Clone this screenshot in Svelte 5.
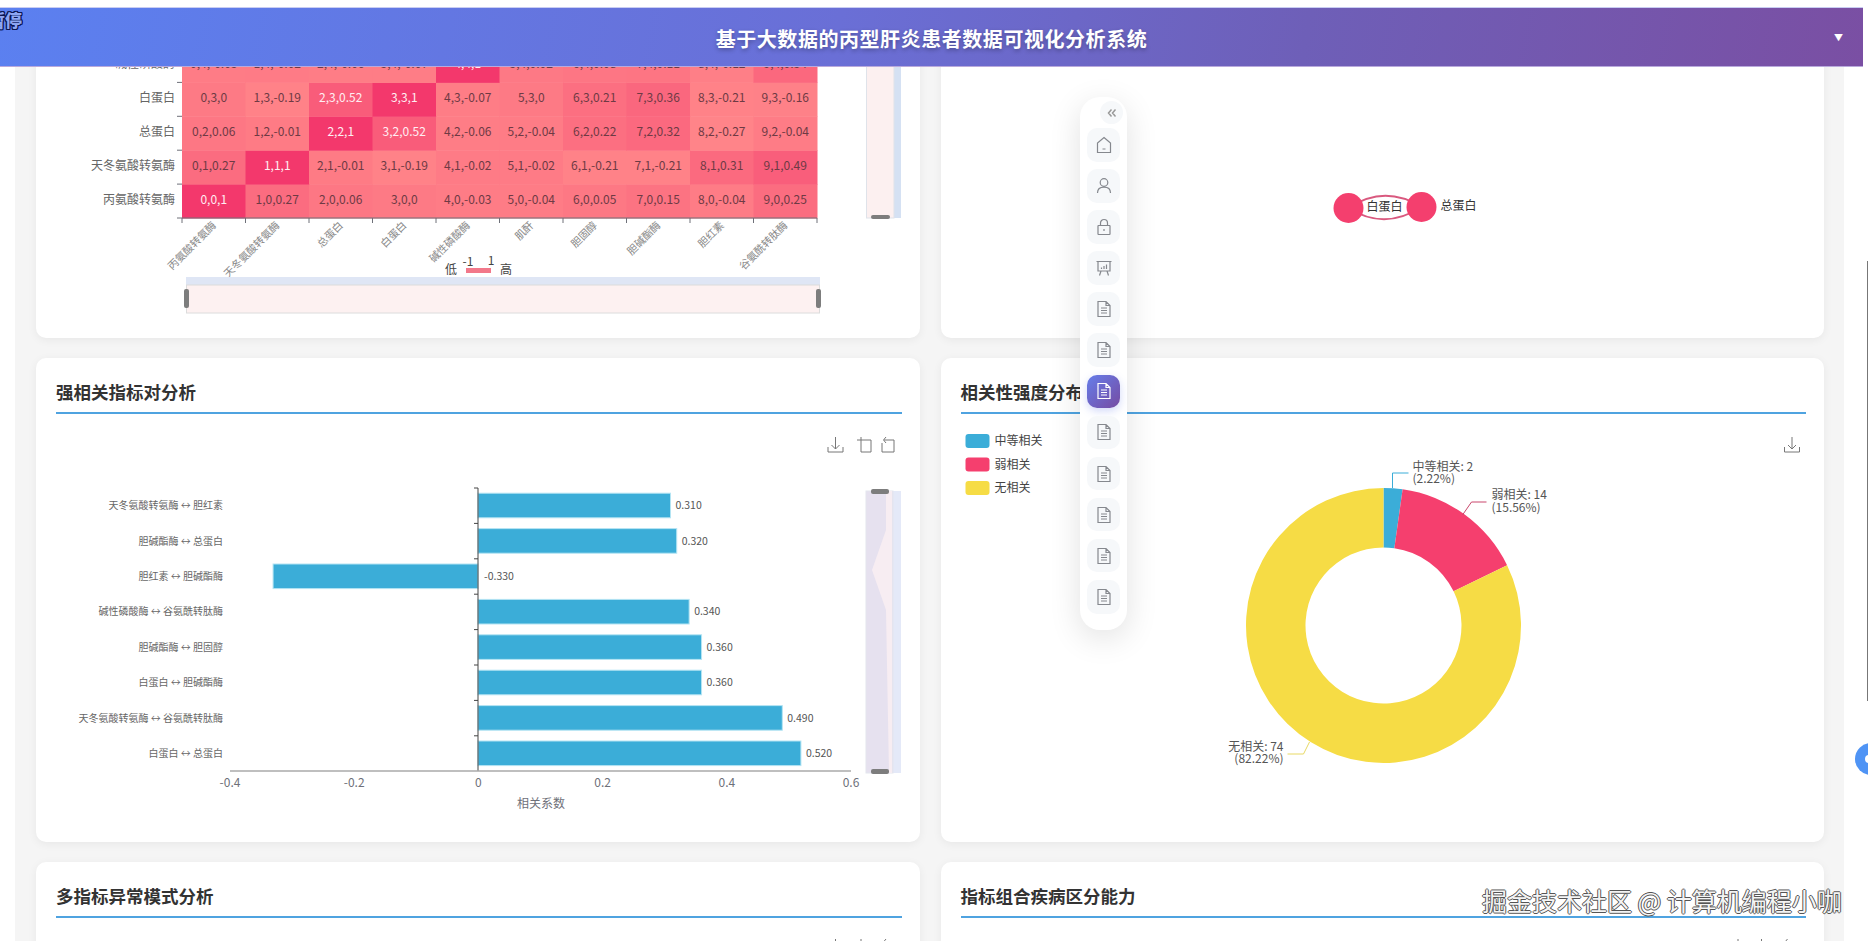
<script>
  const names = ['丙氨酸转氨酶', '天冬氨酸转氨酶', '总蛋白', '白蛋白', '碱性磷酸酶', '肌酐', '胆固醇', '胆碱酯酶', '胆红素', '谷氨酰转肽酶'];

  // rows from the bottom of the matrix upward; the rest is scrolled away
  const matrix = [
    ['1', '0.27', '0.06', '0', '-0.03', '-0.04', '0.05', '0.15', '-0.04', '0.25'],
    ['0.27', '1', '-0.01', '-0.19', '-0.02', '-0.02', '-0.21', '-0.21', '0.31', '0.49'],
    ['0.06', '-0.01', '1', '0.52', '-0.06', '-0.04', '0.22', '0.32', '-0.27', '-0.04'],
    ['0', '-0.19', '0.52', '1', '-0.07', '0', '0.21', '0.36', '-0.21', '-0.16'],
    ['-0.03', '-0.02', '-0.06', '-0.07', '1', '0.02', '0.08', '0.11', '-0.12', '0.34']
  ];

  const cellW = 63.5;
  const cellH = 33.9;
  const heatLeft = 182;
  const heatBottom = 216;

  const heatColor = (v) => {
    const t = Math.pow(Math.min(1, Math.max(0, (Number(v) + 0.3) / 1.3)), 1.4);
    const mix = (a, b) => Math.round(a + (b - a) * t);
    return `rgb(${mix(255, 243)},${mix(132, 56)},${mix(137, 108)})`;
  };

  const bars = [
    ['天冬氨酸转氨酶 ↔ 胆红素', 0.31],
    ['胆碱酯酶 ↔ 总蛋白', 0.32],
    ['胆红素 ↔ 胆碱酯酶', -0.33],
    ['碱性磷酸酶 ↔ 谷氨酰转肽酶', 0.34],
    ['胆碱酯酶 ↔ 胆固醇', 0.36],
    ['白蛋白 ↔ 胆碱酯酶', 0.36],
    ['天冬氨酸转氨酶 ↔ 谷氨酰转肽酶', 0.49],
    ['白蛋白 ↔ 总蛋白', 0.52]
  ];
  const zeroX = 478;
  const perUnit = 621;
  const band = 35.4;
  const barTop = 488;
  const xTicks = ['-0.4', '-0.2', '0', '0.2', '0.4', '0.6'];

  const cx = 1384;
  const cy = 625.5;
  const polar = (r, f) => {
    const a = f * Math.PI * 2 - Math.PI / 2;
    return `${cx + r * Math.cos(a)} ${cy + r * Math.sin(a)}`;
  };
  const slice = (from, to) => {
    const big = to - from > 0.5 ? 1 : 0;
    return `M${polar(137.5, from)}A137.5 137.5 0 ${big} 1 ${polar(137.5, to)}L${polar(78, to)}A78 78 0 ${big} 0 ${polar(78, from)}Z`;
  };
  const slices = [
    { name: '中等相关', color: '#3badd8', from: 0, to: 0.0222 },
    { name: '弱相关', color: '#f53f6e', from: 0.0222, to: 0.1778 },
    { name: '无相关', color: '#f6dc45', from: 0.1778, to: 1 }
  ];

  const dockIcons = ['home', 'user', 'lock', 'board', 'doc', 'doc', 'doc', 'doc', 'doc', 'doc', 'doc', 'doc'];
  const activeDock = 6;
</script>

{#snippet saveIcon(x, y)}
  <g class="tool" transform="translate({x} {y})">
    <path d="M7.5 0V12M3.5 8L7.5 12L11.5 8M0 10V15H15V10" />
  </g>
{/snippet}

{#snippet zoomIcon(x, y)}
  <g class="tool" transform="translate({x} {y})">
    <path d="M4 0V15H14V3H0" />
  </g>
{/snippet}

{#snippet restoreIcon(x, y)}
  <g class="tool" transform="translate({x} {y})">
    <path d="M3 3H13V15H1V6M5 0L2.5 3L5 6" />
  </g>
{/snippet}

<div class="app">
  <span class="paused">暂停</span>

  <header class="topbar">
    <h1>基于大数据的丙型肝炎患者数据可视化分析系统</h1>
    <span class="caret">▼</span>
  </header>

  <main class="content">
    <div class="grid">
      <section class="card">
        <h3>指标相关性热力图</h3>
        <svg class="chart" viewBox="56 -80 845.5 400">
          {#each matrix as row, r}
            {#each row as v, c}
              <rect
                x={heatLeft + c * cellW}
                y={heatBottom - (r + 1) * cellH}
                width={cellW + 0.5}
                height={cellH + 0.5}
                fill={heatColor(v)}
              />
              <text
                class="cell"
                class:strong={Number(v) >= 0.5}
                x={heatLeft + (c + 0.5) * cellW}
                y={heatBottom - (r + 0.5) * cellH + 3}>{c},{r},{v}</text>
            {/each}
            <text class="ylabel" x="175" y={heatBottom - (r + 0.5) * cellH + 3}>{names[r]}</text>
            <line class="axis" x1="177" x2={heatLeft} y1={heatBottom - (r + 1) * cellH} y2={heatBottom - (r + 1) * cellH} />
          {/each}
          <line class="axis" x1="177" x2="817" y1={heatBottom} y2={heatBottom} />
          {#each names as name, c}
            <line class="axis" x1={heatLeft + c * cellW} x2={heatLeft + c * cellW} y1={heatBottom} y2={heatBottom + 5} />
            <text class="xlabel" transform="translate({heatLeft + (c + 0.5) * cellW + 3} 224) rotate(-45)">{name}</text>
          {/each}
          <line class="axis" x1="817" x2="817" y1={heatBottom} y2={heatBottom + 5} />

          <text class="vm" x="451" y="272">低</text>
          <text class="vm" x="506" y="272">高</text>
          <text class="vm" x="468" y="264">-1</text>
          <text class="vm" x="491" y="263">1</text>
          <rect x="466" y="266" width="25" height="5" fill="#f2788a" />

          <rect x="186" y="275" width="634" height="8" fill="#dfe6f5" />
          <rect x="186.5" y="283" width="633" height="28" fill="#fdf1f1" stroke="#dcdcdc" />
          <rect class="handle" x="184" y="287" width="5" height="19" />
          <rect class="handle" x="816" y="287" width="5" height="19" />

          <rect x="894" y="-80" width="7" height="296" fill="#d5e1f3" />
          <rect x="866.5" y="-80" width="27.5" height="296" fill="#fcf0f0" stroke="#dfe3ea" />
          <rect class="handle" x="871" y="213" width="19" height="4" />
        </svg>
      </section>

      <section class="card">
        <h3>相关性网络图</h3>
        <svg class="chart" viewBox="961.5 -80 845.5 400">
          <path class="edge" d="M1349 206Q1385 182 1422 205" />
          <path class="edge" d="M1349 206Q1385 229 1422 205" />
          <circle cx="1349" cy="206" r="15" fill="#f43f6e" />
          <circle cx="1422" cy="205" r="15" fill="#f43f6e" />
          <text class="node" x="1385" y="209">白蛋白</text>
          <text class="node" x="1459" y="208">总蛋白</text>
        </svg>
      </section>

      <section class="card">
        <h3>强相关指标对分析</h3>
        <svg class="chart" viewBox="56 425 845.5 400">
          {@render saveIcon(828, 437)}
          {@render zoomIcon(857, 437)}
          {@render restoreIcon(881, 437)}

          {#each bars as [label, v], i}
            <text class="barlabel" x="223" y={barTop + (i + 0.5) * band + 3.5}>{label}</text>
            <rect
              class="bar"
              x={v < 0 ? zeroX + v * perUnit : zeroX}
              y={barTop + i * band + 5.2}
              width={Math.abs(v) * perUnit}
              height="24.6"
            />
            <text class="barvalue" x={v < 0 ? zeroX + 6 : zeroX + v * perUnit + 5} y={barTop + (i + 0.5) * band + 3.5}>{v.toFixed(3)}</text>
            <line class="axis dark" x1="474" x2={zeroX} y1={barTop + i * band} y2={barTop + i * band} />
          {/each}
          <line class="axis dark" x1={zeroX} x2={zeroX} y1={barTop} y2="771" />
          <line class="axis thick" x1="230" x2="851" y1="771" y2="771" />
          {#each xTicks as t, i}
            <text class="xtick" x={230 + i * 124.2} y="787">{t}</text>
          {/each}
          <text class="xname" x="541" y="808">相关系数</text>

          <rect x="893" y="491" width="8" height="282" fill="#e4e9f8" />
          <rect x="866" y="491" width="27" height="282" fill="#e6e1ef" stroke="#e3e6ee" />
          <path d="M886 491V530L872 570L886 610L889 773H892V491Z" fill="#f7edf2" />
          <rect class="handle" x="871" y="489" width="18" height="5" />
          <rect class="handle" x="871" y="769" width="18" height="5" />
        </svg>
      </section>

      <section class="card">
        <h3>相关性强度分布</h3>
        <svg class="chart" viewBox="961.5 425 845.5 400">
          {@render saveIcon(1785, 437)}
          {#each slices as s, i}
            <rect x="966" y={434 + i * 23.5} width="24" height="14" rx="3" fill={s.color} />
            <text class="legend" x="995" y={445 + i * 23.5}>{s.name}</text>
            <path d={slice(s.from, s.to)} fill={s.color} />
          {/each}
          <path class="leader" stroke="#3badd8" d="M1393 488V473H1409" />
          <path class="leader" stroke="#c9476c" d="M1463 515L1472 502H1487" />
          <path class="leader" stroke="#e8d964" d="M1310 742L1304 754H1288" />
          <text class="pie" x="1413" y="471">中等相关: 2</text>
          <text class="pie" x="1413" y="483">(2.22%)</text>
          <text class="pie" x="1492" y="499">弱相关: 14</text>
          <text class="pie" x="1492" y="512">(15.56%)</text>
          <text class="pie end" x="1284" y="751">无相关: 74</text>
          <text class="pie end" x="1284" y="763">(82.22%)</text>
        </svg>
      </section>

      <section class="card">
        <h3>多指标异常模式分析</h3>
        <svg class="chart" viewBox="56 425 845.5 400">
          {@render saveIcon(828, 435)}
          {@render zoomIcon(857, 435)}
          {@render restoreIcon(881, 435)}
        </svg>
      </section>

      <section class="card">
        <h3>指标组合疾病区分能力</h3>
        <svg class="chart" viewBox="961.5 425 845.5 400">
          {@render saveIcon(1731, 435)}
          {@render zoomIcon(1758, 435)}
          {@render restoreIcon(1783, 435)}
        </svg>
      </section>
    </div>
  </main>

  <nav class="dock">
    <button class="collapse" aria-label="收起">
      <svg viewBox="0 0 12 12" width="12" height="12">
        <path d="M5.5 2.5L2.5 6L5.5 9.5M9.5 2.5L6.5 6L9.5 9.5" />
      </svg>
    </button>
    {#each dockIcons as icon, i}
      <button class="dock-item" class:active={i === activeDock} aria-label={icon}>
        <svg viewBox="0 0 20 20" width="20" height="20">
          {#if icon === 'home'}
            <path d="M10 2.5L16.5 8V17.5H3.5V8ZM8.5 14H11.5" />
          {:else if icon === 'user'}
            <circle cx="10" cy="6.5" r="3.8" />
            <path d="M3.5 17C3.5 13 6 11.2 10 11.2S16.5 13 16.5 17" />
          {:else if icon === 'lock'}
            <rect x="4" y="8.5" width="12" height="9" rx="0.5" />
            <path d="M6.5 8.5V6A3.5 3.5 0 0 1 13.5 6V8.5M10 12V14" />
          {:else if icon === 'board'}
            <path d="M2.5 3.5H17.5M4 3.5V13H16V3.5M7 13L5.5 17.5M13 13L14.5 17.5M7.5 11V9.5M10 11V8M12.5 11V6.5" />
          {:else}
            <path d="M4 2.5H12L16 6.5V17.5H4ZM12 2.5V6.5H16M7 9H13M7 11.5H13M7 14H13" />
          {/if}
        </svg>
      </button>
    {/each}
  </nav>

  <div class="scroll-mark"></div>
  <div class="float-btn"></div>
  <div class="watermark">掘金技术社区 @ 计算机编程小咖</div>
</div>

<style>
  :global(body) {
    margin: 0;
    overflow: hidden;
    background: #fff;
  }

  .app {
    position: relative;
    display: flex;
    flex-direction: column;
    width: 1868px;
    height: 941px;
    padding-top: 7px;
    box-sizing: border-box;
    overflow: hidden;
    font-family: "Noto Sans CJK SC", "Noto Sans", sans-serif;
  }

  .topbar {
    position: relative;
    z-index: 2;
    flex: none;
    display: flex;
    align-items: center;
    justify-content: center;
    width: 1863px;
    height: 60px;
    padding-top: 2px;
    box-sizing: border-box;
    background: linear-gradient(100deg, #5b80f0 0%, #6a6fd6 45%, #6e5fb8 70%, #7a4fa3 100%);
    border-top: 1px solid #c9cdf2;
    border-bottom: 1px solid #b9a9dc;
  }

  .topbar h1 {
    margin: 0;
    font-size: 20px;
    font-weight: 700;
    letter-spacing: 0.55px;
    color: #fff;
    text-shadow: 0 2px 4px rgba(0, 0, 0, 0.3);
  }

  .caret {
    position: absolute;
    right: 20px;
    top: 23px;
    font-size: 9px;
    color: #fff;
  }

  .paused {
    position: absolute;
    z-index: 3;
    left: -12px;
    top: 7px;
    font-size: 17px;
    font-weight: 900;
    color: #8ea6f2;
    text-shadow: 1px 0 #0b1650, -1px 0 #0b1650, 0 1px #0b1650, 0 -1px #0b1650, 1px 1px #0b1650, -1px -1px #0b1650, 1px -1px #0b1650, -1px 1px #0b1650;
  }

  .content {
    flex: 1;
    min-height: 0;
    margin: 0 24px 0 15px;
    overflow: hidden;
    background: #f5f5f5;
  }

  .grid {
    display: grid;
    grid-template-columns: 1fr 1fr;
    grid-auto-rows: 483.5px;
    gap: 20px 21px;
    margin-top: -212.5px;
    padding: 0 20px 0 21px;
  }

  .card {
    padding: 20px 18px 0 20px;
    background: #fff;
    border-radius: 10px;
    box-shadow: 0 2px 10px rgba(0, 0, 0, 0.06);
  }

  .card h3 {
    margin: 0;
    height: 34px;
    border-bottom: 2px solid #4fa3e0;
    font-size: 17.5px;
    line-height: 28px;
    font-weight: 700;
    color: #333;
  }

  .chart {
    display: block;
    width: 100%;
    height: 400px;
    margin-top: 11px;
    overflow: visible;
  }

  .cell {
    font-size: 12px;
    text-anchor: middle;
    fill: #6e3a44;
  }

  .cell.strong {
    fill: #ffeef2;
  }

  .ylabel {
    font-size: 12px;
    text-anchor: end;
    fill: #666;
  }

  .xlabel {
    font-size: 10.5px;
    text-anchor: end;
    fill: #888;
  }

  .axis {
    stroke: #6e7079;
    stroke-width: 1;
  }

  .axis.dark {
    stroke: #444;
  }

  .axis.thick {
    stroke: #aaa;
    stroke-width: 1.5;
  }

  .vm {
    font-size: 12px;
    text-anchor: middle;
    fill: #444;
  }

  .handle {
    fill: #7d7d7d;
    rx: 2px;
  }

  .edge {
    fill: none;
    stroke: #d9597f;
    stroke-width: 2;
  }

  .node {
    font-size: 12px;
    text-anchor: middle;
    fill: #333;
  }

  .tool path {
    fill: none;
    stroke: #777;
    stroke-width: 1;
  }

  .bar {
    fill: #3badd8;
    stroke: #b4e4f3;
    stroke-width: 1;
  }

  .barlabel {
    font-size: 10px;
    text-anchor: end;
    fill: #666;
  }

  .barvalue {
    font-size: 10.5px;
    fill: #555;
  }

  .xtick {
    font-size: 12px;
    text-anchor: middle;
    fill: #6e7079;
  }

  .xname {
    font-size: 12px;
    text-anchor: middle;
    fill: #6e7079;
  }

  .legend {
    font-size: 12px;
    fill: #444;
  }

  .leader {
    fill: none;
    stroke-width: 1;
  }

  .pie {
    font-size: 12px;
    fill: #555;
  }

  .pie.end {
    text-anchor: end;
  }

  .dock {
    position: absolute;
    z-index: 1;
    left: 1080px;
    top: 97px;
    display: flex;
    flex-direction: column;
    gap: 7.6px;
    width: 47px;
    height: 533px;
    padding: 4px 7px 0;
    box-sizing: border-box;
    background: #fff;
    border-radius: 20px;
    box-shadow: 0 8px 32px rgba(0, 0, 0, 0.12);
  }

  .collapse {
    flex: none;
    align-self: flex-end;
    display: flex;
    align-items: center;
    justify-content: center;
    width: 23px;
    height: 23px;
    margin: 0 -3px -3.6px 0;
    padding: 0;
    border: 0;
    border-radius: 50%;
    background: #f6f8fa;
  }

  .collapse path {
    fill: none;
    stroke: #999;
    stroke-width: 1.5;
  }

  .dock-item {
    flex: none;
    display: flex;
    align-items: center;
    justify-content: center;
    width: 33px;
    height: 33.5px;
    padding: 0;
    border: 0;
    border-radius: 10px;
    background: #f6f8fa;
  }

  .dock-item svg > * {
    fill: none;
    stroke: #85888e;
    stroke-width: 1.2;
  }

  .dock-item.active {
    background: linear-gradient(135deg, #667eea, #764ba2);
    box-shadow: 0 3px 8px rgba(102, 126, 234, 0.3);
  }

  .dock-item.active svg > * {
    stroke: #fff;
  }

  .scroll-mark {
    position: absolute;
    right: 0;
    top: 261px;
    width: 1px;
    height: 440px;
    background: #777;
  }

  .float-btn {
    position: absolute;
    left: 1855px;
    top: 743px;
    width: 32px;
    height: 32px;
    border-radius: 50%;
    background: #4f94f5;
  }

  .float-btn::after {
    content: "";
    position: absolute;
    left: 10px;
    top: 12px;
    width: 8px;
    height: 8px;
    border-radius: 50%;
    background: #fff;
  }

  .watermark {
    position: absolute;
    z-index: 4;
    left: 1482px;
    top: 882px;
    font-size: 25px;
    line-height: 36px;
    white-space: nowrap;
    color: #f4f4f4;
    text-shadow: 1px 0 #555, -1px 0 #555, 0 1px #555, 0 -1px #555;
  }
</style>
